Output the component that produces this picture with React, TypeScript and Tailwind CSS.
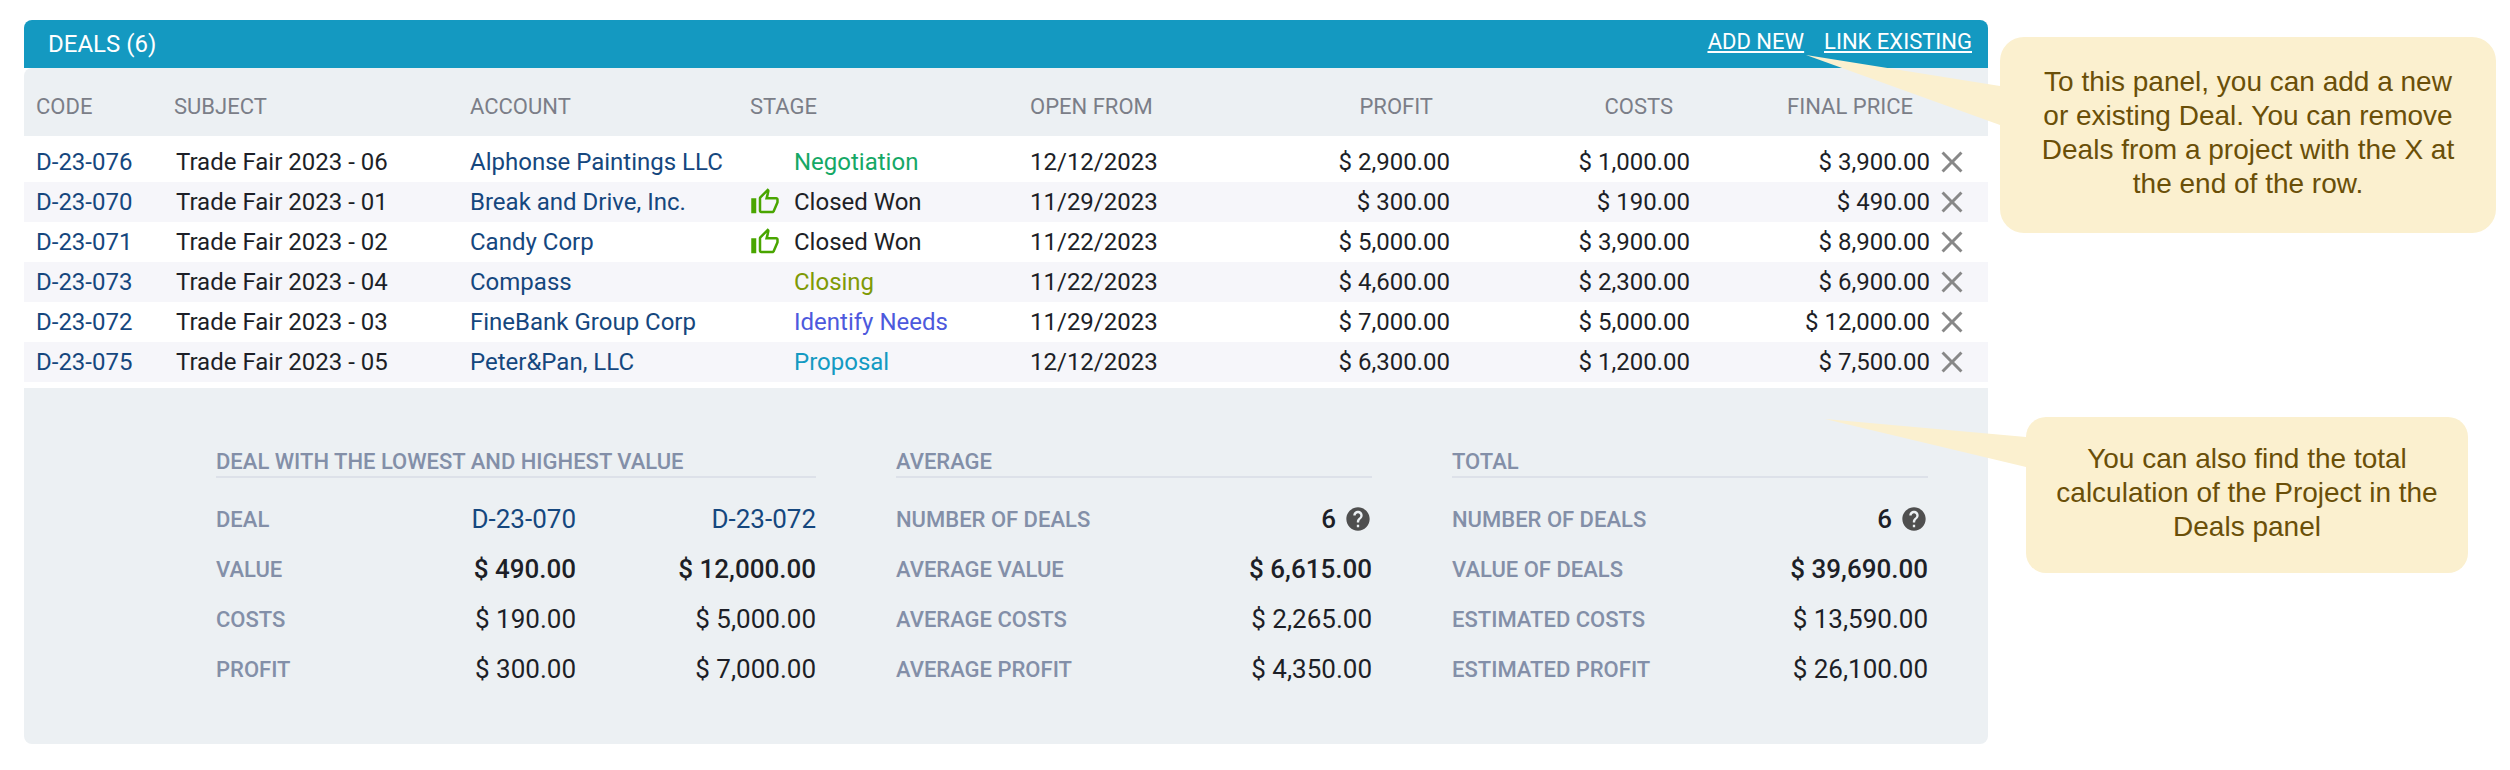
import React from "react";
import { MdHelp, MdOutlineThumbUp, MdClose } from "react-icons/md";

type Deal = {
  code: string;
  subject: string;
  account: string;
  stage: string;
  stageClass: string;
  won?: boolean;
  openFrom: string;
  profit: string;
  costs: string;
  price: string;
};

const deals: Deal[] = [
  { code: "D-23-076", subject: "Trade Fair 2023 - 06", account: "Alphonse Paintings LLC", stage: "Negotiation", stageClass: "text-[#15a866]", openFrom: "12/12/2023", profit: "$ 2,900.00", costs: "$ 1,000.00", price: "$ 3,900.00" },
  { code: "D-23-070", subject: "Trade Fair 2023 - 01", account: "Break and Drive, Inc.", stage: "Closed Won", stageClass: "text-[#1d1f27]", won: true, openFrom: "11/29/2023", profit: "$ 300.00", costs: "$ 190.00", price: "$ 490.00" },
  { code: "D-23-071", subject: "Trade Fair 2023 - 02", account: "Candy Corp", stage: "Closed Won", stageClass: "text-[#1d1f27]", won: true, openFrom: "11/22/2023", profit: "$ 5,000.00", costs: "$ 3,900.00", price: "$ 8,900.00" },
  { code: "D-23-073", subject: "Trade Fair 2023 - 04", account: "Compass", stage: "Closing", stageClass: "text-[#7f9a06]", openFrom: "11/22/2023", profit: "$ 4,600.00", costs: "$ 2,300.00", price: "$ 6,900.00" },
  { code: "D-23-072", subject: "Trade Fair 2023 - 03", account: "FineBank Group Corp", stage: "Identify Needs", stageClass: "text-[#4d59dd]", openFrom: "11/29/2023", profit: "$ 7,000.00", costs: "$ 5,000.00", price: "$ 12,000.00" },
  { code: "D-23-075", subject: "Trade Fair 2023 - 05", account: "Peter&Pan, LLC", stage: "Proposal", stageClass: "text-[#149ac2]", openFrom: "12/12/2023", profit: "$ 6,300.00", costs: "$ 1,200.00", price: "$ 7,500.00" },
];

type SummaryRow = {
  label: string;
  values: string[];
  kind?: "link" | "strong" | "count";
};

const lowHigh: SummaryRow[] = [
  { label: "DEAL", values: ["D-23-070", "D-23-072"], kind: "link" },
  { label: "VALUE", values: ["$ 490.00", "$ 12,000.00"], kind: "strong" },
  { label: "COSTS", values: ["$ 190.00", "$ 5,000.00"] },
  { label: "PROFIT", values: ["$ 300.00", "$ 7,000.00"] },
];

const average: SummaryRow[] = [
  { label: "NUMBER OF DEALS", values: ["6"], kind: "count" },
  { label: "AVERAGE VALUE", values: ["$ 6,615.00"], kind: "strong" },
  { label: "AVERAGE COSTS", values: ["$ 2,265.00"] },
  { label: "AVERAGE PROFIT", values: ["$ 4,350.00"] },
];

const total: SummaryRow[] = [
  { label: "NUMBER OF DEALS", values: ["6"], kind: "count" },
  { label: "VALUE OF DEALS", values: ["$ 39,690.00"], kind: "strong" },
  { label: "ESTIMATED COSTS", values: ["$ 13,590.00"] },
  { label: "ESTIMATED PROFIT", values: ["$ 26,100.00"] },
];

function SummaryValue({ value, kind }: { value: string; kind?: SummaryRow["kind"] }) {
  if (kind === "link") {
    return (
      <a href="#" className="text-[#15477e]">
        {value}
      </a>
    );
  }
  if (kind === "count") {
    return (
      <span className="flex items-center justify-end gap-2 font-medium">
        {value}
        <button type="button" aria-label="Help" className="text-[#4f4f4f]">
          <MdHelp className="size-7" />
        </button>
      </span>
    );
  }
  return <span className={kind === "strong" ? "font-medium" : ""}>{value}</span>;
}

function Summary({ title, rows }: { title: string; rows: SummaryRow[] }) {
  return (
    <section>
      <h3 className="border-b-2 border-[#dde1e9] text-[22px] leading-7 font-medium text-[#838fa8]">{title}</h3>
      <table className="mt-4 w-full table-fixed">
        <tbody>
          {rows.map((row) => (
            <tr key={row.label} className="h-[50px]">
              <th
                scope="row"
                className={`p-0 text-left text-[22px] font-medium whitespace-nowrap text-[#838fa8] ${row.values.length > 1 ? "w-1/5" : "w-1/2"}`}
              >
                {row.label}
              </th>
              {row.values.map((value) => (
                <td key={value} className="p-0 text-right text-[26px]">
                  <SummaryValue value={value} kind={row.kind} />
                </td>
              ))}
            </tr>
          ))}
        </tbody>
      </table>
    </section>
  );
}

function DealsTable() {
  return (
    <table className="w-full table-fixed border-separate border-spacing-0 text-left text-[24px] whitespace-nowrap">
      <colgroup>
        <col className="w-[140px]" />
        <col className="w-[294px]" />
        <col className="w-[280px]" />
        <col className="w-[280px]" />
        <col className="w-[192px]" />
        <col className="w-[240px]" />
        <col className="w-[240px]" />
        <col className="w-[240px]" />
        <col className="w-[58px]" />
      </colgroup>
      <thead>
        <tr className="h-[74px] text-[22px] text-[#7b7e88] [&>*]:border-b-6 [&>*]:border-white [&>*]:bg-[#ecf0f3] [&>*]:pt-2 [&>*]:font-normal">
          <th className="rounded-tl-lg pl-3">CODE</th>
          <th className="pl-2.5">SUBJECT</th>
          <th className="pl-3">ACCOUNT</th>
          <th className="pl-3">STAGE</th>
          <th className="pl-3">OPEN FROM</th>
          <th className="pr-[17px] text-right">PROFIT</th>
          <th className="pr-[17px] text-right">COSTS</th>
          <th className="pr-[17px] text-right">FINAL PRICE</th>
          <td />
        </tr>
      </thead>
      <tbody>
        {deals.map((deal) => (
          <tr key={deal.code} className="h-10 even:bg-[#f6f6fa]">
            <td className="pl-3">
              <a href="#" className="text-[#15477e]">
                {deal.code}
              </a>
            </td>
            <td className="pl-3">{deal.subject}</td>
            <td className="pl-3">
              <a href="#" className="text-[#15477e]">
                {deal.account}
              </a>
            </td>
            <td className="pl-3">
              <span className={`flex items-center ${deal.stageClass}`}>
                <span className="w-11">{deal.won && <MdOutlineThumbUp className="size-[30px] text-[#49a500]" />}</span>
                {deal.stage}
              </span>
            </td>
            <td className="pl-3">{deal.openFrom}</td>
            <td className="text-right">{deal.profit}</td>
            <td className="text-right">{deal.costs}</td>
            <td className="text-right">{deal.price}</td>
            <td className="pl-1">
              <button type="button" aria-label={`Remove ${deal.code}`} className="block text-[#888888]">
                <MdClose className="size-9" />
              </button>
            </td>
          </tr>
        ))}
      </tbody>
    </table>
  );
}

export default function App() {
  return (
    <main className="flex min-h-screen items-start bg-white pt-5 pl-6 font-[Roboto,sans-serif] text-[#1d1f27]">
      <section className="min-w-0 flex-1">
        <header className="flex h-12 items-center justify-between rounded-t-lg bg-[#1499c1] pr-4 pl-6 text-white">
          <h2 className="text-[24px]">DEALS (6)</h2>
          <nav className="flex gap-5 pb-1.5 text-[22px] underline decoration-2 underline-offset-2">
            <a href="#">ADD NEW</a>
            <a href="#">LINK EXISTING</a>
          </nav>
        </header>
        <DealsTable />
        <footer className="mt-1.5 grid grid-cols-[600fr_476fr_476fr] gap-20 rounded-b-lg bg-[#ecf0f3] pt-[60px] pr-[60px] pb-[50px] pl-48">
          <Summary title="DEAL WITH THE LOWEST AND HIGHEST VALUE" rows={lowHigh} />
          <Summary title="AVERAGE" rows={average} />
          <Summary title="TOTAL" rows={total} />
        </footer>
      </section>

      {/* Callouts */}
      <aside className="w-[522px] shrink-0 pt-[17px] pr-3.5 pl-3 text-center font-['Liberation_Sans',Arial,sans-serif] text-[28px] leading-[34px] text-[#6a4f08]">
        <div className="relative rounded-3xl bg-[#fbf0cf] px-8 pt-7 pb-8">
          <svg className="absolute top-[18px] right-full h-[70px] w-[194px]" viewBox="0 0 194 70" fill="#fbf0cf">
            <path d="M0 0L194 31V70Z" />
          </svg>
          <p>To this panel, you can add a new or existing Deal. You can remove Deals from a project with the X at the end of the row.</p>
        </div>
        <div className="relative mt-[184px] mr-7 ml-[26px] rounded-[20px] bg-[#fbf0cf] px-6 pt-[25px] pb-[29px]">
          <svg className="absolute top-0.5 right-full h-12 w-[201px]" viewBox="0 0 201 48" fill="#fbf0cf">
            <path d="M0 0L201 18V48Z" />
          </svg>
          <p>You can also find the total calculation of the Project in the Deals panel</p>
        </div>
      </aside>
    </main>
  );
}
